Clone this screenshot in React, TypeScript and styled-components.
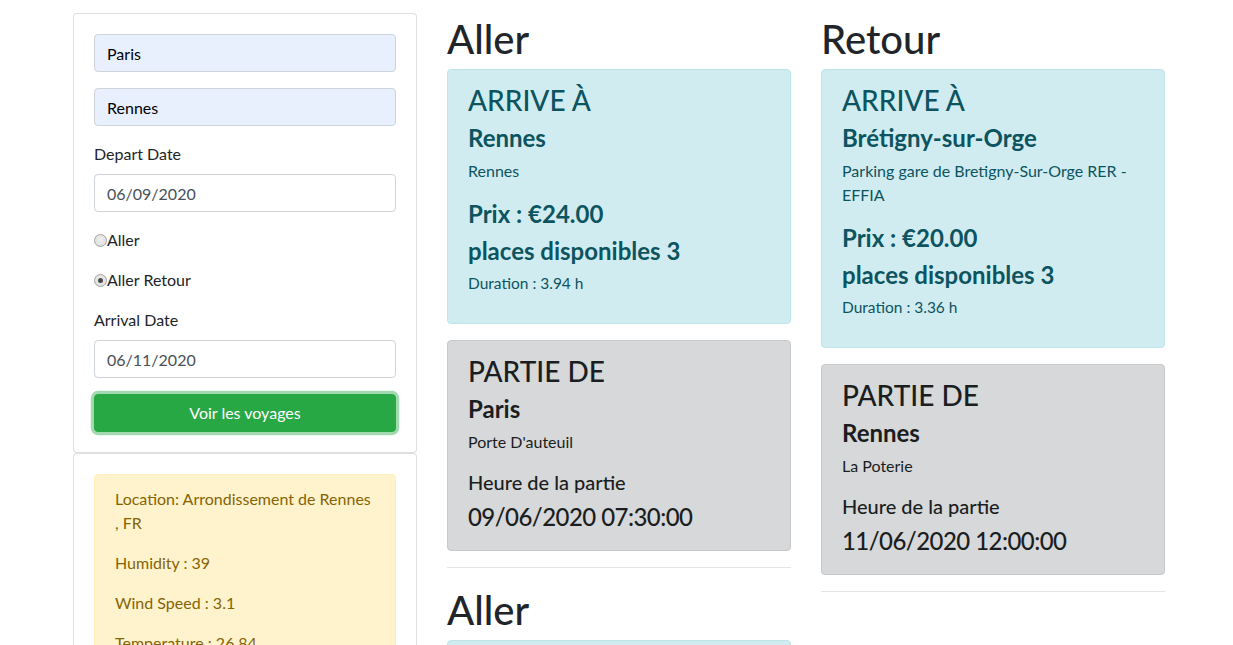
import React from "react";
import styled, { createGlobalStyle, css } from "styled-components";

const GlobalStyle = createGlobalStyle`
  html, body { margin: 0; padding: 0; overflow: hidden; background: #fff; }
  body {
    font-family: Lato, "Open Sans", sans-serif;
    font-size: 16px;
    line-height: 1.5;
    color: #212529;
  }
  *, *::before, *::after { box-sizing: border-box; }
`;

const Page = styled.div`
  display: flex;
  align-items: flex-start;
  gap: 30px;
  padding: 13px 0 0 73px;
`;

const Column = styled.div`
  flex: 0 0 344px;
  width: 344px;
`;

const Card = styled.div`
  border: 1px solid rgba(0, 0, 0, 0.125);
  border-radius: 4px;
  padding: 20px;
  background: #fff;
`;

const Field = styled.input<{ $filled?: boolean }>`
  display: block;
  width: 100%;
  height: 38px;
  padding: 6px 12px;
  font: inherit;
  font-size: 16px;
  line-height: 1.5;
  color: ${(p) => (p.$filled ? "#000" : "#495057")};
  background: ${(p) => (p.$filled ? "#e8f0fe" : "#fff")};
  border: 1px solid #ced4da;
  border-radius: 4px;
  margin: 0 0 16px;
  outline: none;
`;

const Label = styled.label`
  display: block;
  margin-bottom: 8px;
  line-height: 24px;
`;

const RadioRow = styled.label`
  display: flex;
  align-items: center;
  height: 24px;
  margin-bottom: 16px;
  line-height: 24px;
`;

const Radio = styled.input`
  appearance: none;
  width: 13px;
  height: 13px;
  margin: 1px 0 0;
  border-radius: 50%;
  border: 1px solid #a3a3a3;
  background: radial-gradient(circle at 50% 40%, #f0f0f0 0%, #d8d8d8 100%);
  display: grid;
  place-content: center;
  &:checked::before {
    content: "";
    width: 5px;
    height: 5px;
    border-radius: 50%;
    background: #4a4a4a;
  }
`;

const Button = styled.button`
  display: block;
  width: 100%;
  height: 38px;
  font: inherit;
  font-size: 16px;
  color: #fff;
  background: #28a745;
  border: 1px solid #28a745;
  border-radius: 4px;
  box-shadow: 0 0 0 3.2px rgba(72, 180, 97, 0.5);
  cursor: pointer;
`;

type Tone = "info" | "dark" | "warning";
const tones: Record<Tone, ReturnType<typeof css>> = {
  info: css`
    color: #0c5460;
    background: #d1ecf1;
    border-color: #bee5eb;
  `,
  dark: css`
    color: #1b1e21;
    background: #d6d8d9;
    border-color: #c6c8ca;
  `,
  warning: css`
    color: #856404;
    background: #fff3cd;
    border-color: #ffeeba;
  `,
};

const Alert = styled.div<{ $tone: Tone }>`
  border: 1px solid transparent;
  border-radius: 4px;
  padding: 12px 20px;
  margin-bottom: 16px;
  ${(p) => tones[p.$tone]}
`;

const WeatherLine = styled.p`
  margin: 0 0 16px;
  line-height: 24px;
`;

const SectionTitle = styled.h1`
  font-size: 40px;
  padding-top: 4px;
  line-height: 44px;
  font-weight: 500;
  margin: 0 0 8px;
`;

const AlertTitle = styled.h3`
  font-size: 28px;
  padding-top: 3px;
  line-height: 30.6px;
  font-weight: 500;
  margin: 0 0 8px;
`;

const Strong = styled.h4<{ $regular?: boolean; $last?: boolean }>`
  font-size: 24px;
  line-height: 28.8px;
  font-weight: ${(p) => (p.$regular ? 500 : 700)};
  letter-spacing: ${(p) => (p.$regular ? "-0.55px" : "0")};
  margin: 0 0 ${(p) => (p.$last ? "6px" : "8px")};
`;

const SmallText = styled.p`
  font-size: 16px;
  line-height: 24px;
  margin: -1px 0 17px;
`;

const Duration = styled.p`
  font-size: 15.5px;
  line-height: 21px;
  margin: -1px 0 17px;
`;

const SubTitle = styled.h5`
  font-size: 20px;
  line-height: 24px;
  font-weight: 500;
  margin: -1px 0 9px;
`;

const Divider = styled.hr`
  border: 0;
  border-top: 1px solid rgba(0, 0, 0, 0.1);
  margin: 16px 0;
`;

type Trip = {
  city: string;
  stop: string;
  price: string;
  seats: number;
  duration: string;
  fromCity: string;
  fromStop: string;
  time: string;
};

const TripBlock: React.FC<{ title: string; trip: Trip }> = ({ title, trip }) => (
  <>
    <SectionTitle>{title}</SectionTitle>
    <Alert $tone="info">
      <AlertTitle>ARRIVE À</AlertTitle>
      <Strong>{trip.city}</Strong>
      <SmallText>{trip.stop}</SmallText>
      <Strong>Prix : {trip.price}</Strong>
      <Strong>places disponibles {trip.seats}</Strong>
      <Duration>Duration : {trip.duration}</Duration>
    </Alert>
    <Alert $tone="dark">
      <AlertTitle>PARTIE DE</AlertTitle>
      <Strong>{trip.fromCity}</Strong>
      <SmallText>{trip.fromStop}</SmallText>
      <SubTitle>Heure de la partie</SubTitle>
      <Strong $regular $last>
        {trip.time}
      </Strong>
    </Alert>
    <Divider />
  </>
);

const aller: Trip[] = [
  {
    city: "Rennes",
    stop: "Rennes",
    price: "€24.00",
    seats: 3,
    duration: "3.94 h",
    fromCity: "Paris",
    fromStop: "Porte D'auteuil",
    time: "09/06/2020 07:30:00",
  },
  {
    city: "Rennes",
    stop: "Rennes",
    price: "€25.00",
    seats: 3,
    duration: "4.10 h",
    fromCity: "Paris",
    fromStop: "Porte D'auteuil",
    time: "09/06/2020 10:30:00",
  },
];

const retour: Trip[] = [
  {
    city: "Brétigny-sur-Orge",
    stop: "Parking gare de Bretigny-Sur-Orge RER - EFFIA",
    price: "€20.00",
    seats: 3,
    duration: "3.36 h",
    fromCity: "Rennes",
    fromStop: "La Poterie",
    time: "11/06/2020 12:00:00",
  },
];

export default function App() {
  return (
    <>
      <GlobalStyle />
      <Page>
        <Column>
          <Card>
            <Field $filled defaultValue="Paris" readOnly />
            <Field $filled defaultValue="Rennes" readOnly />
            <Label>Depart Date</Label>
            <Field defaultValue="06/09/2020" readOnly />
            <RadioRow>
              <Radio type="radio" name="trip" />
              Aller
            </RadioRow>
            <RadioRow>
              <Radio type="radio" name="trip" defaultChecked />
              Aller Retour
            </RadioRow>
            <Label>Arrival Date</Label>
            <Field defaultValue="06/11/2020" readOnly />
            <Button>Voir les voyages</Button>
          </Card>
          <Card>
            <Alert $tone="warning">
              <WeatherLine>Location: Arrondissement de Rennes , FR</WeatherLine>
              <WeatherLine>Humidity : 39</WeatherLine>
              <WeatherLine>Wind Speed : 3.1</WeatherLine>
              <WeatherLine>Temperature : 26.84</WeatherLine>
            </Alert>
          </Card>
        </Column>
        <Column>
          {aller.map((t, i) => (
            <TripBlock key={i} title="Aller" trip={t} />
          ))}
        </Column>
        <Column>
          {retour.map((t, i) => (
            <TripBlock key={i} title="Retour" trip={t} />
          ))}
        </Column>
      </Page>
    </>
  );
}
